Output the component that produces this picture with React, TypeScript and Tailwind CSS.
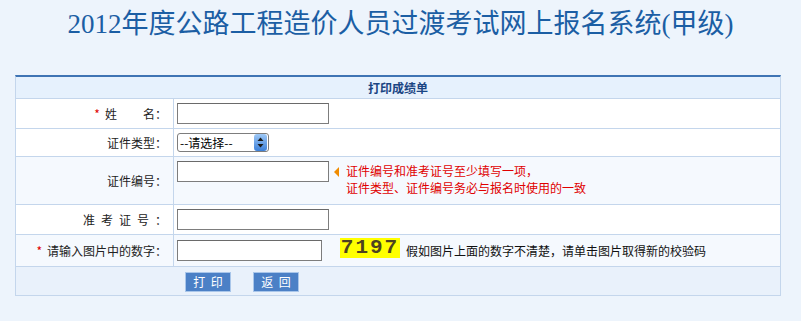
import React from "react";

const font = { fontFamily: '"Noto Sans CJK SC", "Noto Sans", sans-serif' };

function Label({ children, star }: { children: React.ReactNode; star?: boolean }) {
  return (
    <div className="w-[158px] shrink-0 border-r border-[#c4d6ec] flex items-center justify-end pr-[6px] text-[12px] text-[#222] whitespace-nowrap">
      {star && <span className="text-[#e00000] mr-[5px] text-[12px]">*</span>}
      {children}
    </div>
  );
}

function TextInput({ w = 152 }: { w?: number }) {
  return (
    <div
      className="h-[21px] bg-white border border-[#7d7d7d] border-t-[#6a6a6a]"
      style={{ width: w }}
    />
  );
}

function Btn({ children }: { children: React.ReactNode }) {
  return (
    <div className="w-[46px] h-[20px] bg-[#4b80c6] border border-[#a9c6ea] flex items-center justify-center text-white text-[12px] whitespace-nowrap">
      {children}
    </div>
  );
}

export default function App() {
  return (
    <div className="w-[801px] h-[321px] bg-[#edf4fc] overflow-hidden" style={font}>
      <div
        className="h-[52px] flex items-center justify-center pb-[3px] text-[27px] text-[#1b5ea4] whitespace-nowrap"
        style={{ fontFamily: '"Liberation Serif", "Noto Sans CJK SC", serif' }}
      >
        2012年度公路工程造价人员过渡考试网上报名系统(甲级)
      </div>
      <div className="mt-[23px] ml-[15px] w-[766px] border-x border-b border-[#c4d6ec] border-t-2 border-t-[#3f74b4]">
        <div className="h-[22px] bg-[#e6f1fd] border-b border-[#c4d6ec] flex items-center justify-center text-[12px] font-bold text-[#1a4583]">
          打印成绩单
        </div>
        <div className="h-[30px] flex bg-white border-b border-[#c4d6ec]">
          <Label star>
            <span>姓</span>
            <span className="ml-[26px]">名：</span>
          </Label>
          <div className="flex items-center pl-[3px]">
            <TextInput />
          </div>
        </div>
        <div className="h-[28px] flex bg-white border-b border-[#c4d6ec]">
          <Label>证件类型：</Label>
          <div className="flex items-center pl-[3px]">
            <div className="w-[92px] h-[19px] bg-white border border-[#7d7d7d] rounded-[3px] flex items-center justify-between pl-[2px] text-[12px] text-black overflow-hidden">
              <span>--请选择--</span>
              <div className="w-[13px] h-[17px] rounded-[3px] bg-gradient-to-b from-[#9ec8f5] to-[#3a7fd8] flex flex-col items-center justify-center mr-[1px]">
                <svg width="7" height="11" viewBox="0 0 7 11">
                  <path d="M3.5 0.5 L6.5 4 L0.5 4 Z" fill="#1a1a1a" />
                  <path d="M3.5 10.5 L6.5 7 L0.5 7 Z" fill="#1a1a1a" />
                </svg>
              </div>
            </div>
          </div>
        </div>
        <div className="h-[48px] flex bg-[#f5f9fe] border-b border-[#c4d6ec]">
          <Label>证件编号：</Label>
          <div className="flex items-start pl-[3px] pt-[4px]">
            <TextInput />
            <div className="ml-[5px] flex items-start">
              <svg width="6" height="10" viewBox="0 0 6 10" className="mt-[6px]">
                <path d="M0 5 L5 0 L5 10 Z" fill="#f08c00" />
              </svg>
              <div className="ml-[6px] text-[12px] leading-[17px] text-[#e00000] pt-[1px]">
                <div>证件编号和准考证号至少填写一项，</div>
                <div>证件类型、证件编号务必与报名时使用的一致</div>
              </div>
            </div>
          </div>
        </div>
        <div className="h-[30px] flex bg-white border-b border-[#c4d6ec]">
          <Label>
            <span className="tracking-[6px]">准考证号</span>
            <span>：</span>
          </Label>
          <div className="flex items-center pl-[3px]">
            <TextInput />
          </div>
        </div>
        <div className="h-[32px] flex bg-[#f5f9fe] border-b border-[#c4d6ec]">
          <Label star>请输入图片中的数字：</Label>
          <div className="flex items-center pl-[3px]">
            <TextInput w={145} />
            <div
              className="ml-[18px] mb-[5px] w-[60px] h-[20px] bg-[#ffff00] flex items-center justify-center text-[21px] font-bold text-[#4d4220] tracking-[2px]"
              style={{ fontFamily: '"Liberation Mono", monospace' }}
            >
              7197
            </div>
            <span className="ml-[6px] text-[12px] text-[#111] whitespace-nowrap">假如图片上面的数字不清楚，请单击图片取得新的校验码</span>
          </div>
        </div>
        <div className="h-[28px] flex bg-[#e9f1fb]">
          <div className="w-[158px] shrink-0" />
          <div className="flex items-center pl-[11px] pt-[1px] gap-[22px]">
            <Btn>打&nbsp;&nbsp;印</Btn>
            <Btn>返&nbsp;&nbsp;回</Btn>
          </div>
        </div>
      </div>
    </div>
  );
}
